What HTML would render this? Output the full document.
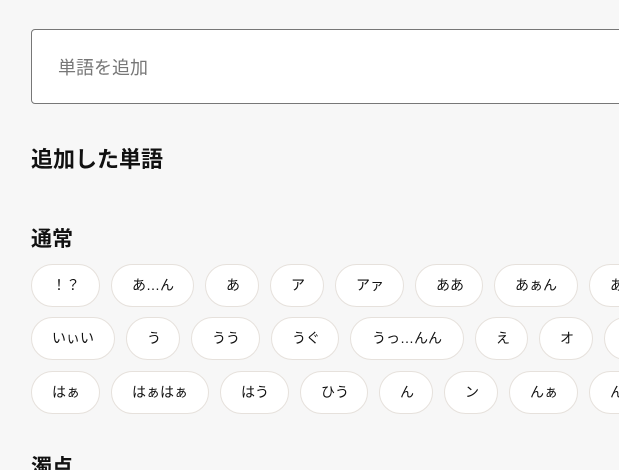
<!DOCTYPE html>
<html style="overflow:hidden;width:619px;height:470px"><head><meta charset="utf-8"><style>
body{margin:0;background:#f7f7f7;font-family:"Liberation Sans","Noto Sans CJK JP",sans-serif;color:#111;width:619px;height:470px;overflow:hidden;position:relative}
.wrap{position:absolute;left:0;top:0;width:619px;height:470px;overflow:hidden}
.inp{position:absolute;left:31px;top:29px;width:620px;height:75px;border:1px solid #777;border-radius:4px;background:#fff;box-sizing:border-box}
.inp span{position:absolute;left:26px;top:26px;font-size:18px;color:#777;line-height:24px}
h2{position:absolute;left:31px;margin:0;font-weight:bold;white-space:nowrap}
.row{position:absolute;left:31px;display:flex;gap:11px;white-space:nowrap}
.c{height:43px;box-sizing:border-box;border:1px solid #e6e1dc;border-radius:22px;background:#fff;font-size:14px;line-height:41px;padding:0 20px;text-align:center;flex:none}
.l{text-align:left}
</style></head><body><div class="wrap">
<div class="inp"><span>単語を追加</span></div>
<h2 style="top:145px;font-size:22px;line-height:30px">追加した単語</h2>
<h2 style="top:226px;font-size:21px;line-height:28px">通常</h2>
<div class="row" style="top:264px">
<div class="c" style="width:69px">！？</div><div class="c" style="width:83px">あ…ん</div><div class="c" style="width:54px">あ</div><div class="c" style="width:54px">ア</div><div class="c" style="width:69px">アァ</div><div class="c" style="width:68px">ああ</div><div class="c" style="width:84px">あぁん</div><div class="c l" style="width:84px">あああ</div></div>
<div class="row" style="top:317px">
<div class="c" style="width:84px">いぃい</div><div class="c" style="width:54px">う</div><div class="c" style="width:69px">うう</div><div class="c" style="width:68px">うぐ</div><div class="c" style="width:114px">うっ…んん</div><div class="c" style="width:53px">え</div><div class="c" style="width:54px">オ</div><div class="c" style="width:54px">　</div></div>
<div class="row" style="top:371px">
<div class="c" style="width:69px">はぁ</div><div class="c" style="width:98px">はぁはぁ</div><div class="c" style="width:69px">はう</div><div class="c" style="width:68px">ひう</div><div class="c" style="width:54px">ん</div><div class="c" style="width:54px">ン</div><div class="c" style="width:69px">んぁ</div><div class="c l" style="width:69px">んん</div></div>
<h2 style="top:454px;font-size:21px;line-height:28px">濁点</h2>
</div></body></html>
